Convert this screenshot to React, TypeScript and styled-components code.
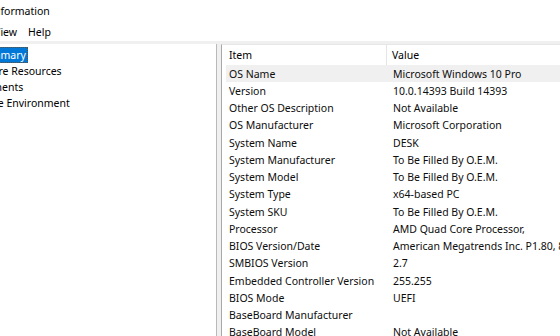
import styled, { createGlobalStyle } from "styled-components";

const GlobalStyle = createGlobalStyle`
  html, body {
    margin: 0;
    padding: 0;
    width: 560px;
    height: 336px;
    overflow: hidden;
    background: #ffffff;
  }
`;

const rows: [string, string][] = [
  ["OS Name", "Microsoft Windows 10 Pro"],
  ["Version", "10.0.14393 Build 14393"],
  ["Other OS Description", "Not Available"],
  ["OS Manufacturer", "Microsoft Corporation"],
  ["System Name", "DESK"],
  ["System Manufacturer", "To Be Filled By O.E.M."],
  ["System Model", "To Be Filled By O.E.M."],
  ["System Type", "x64-based PC"],
  ["System SKU", "To Be Filled By O.E.M."],
  ["Processor", "AMD Quad Core Processor,"],
  ["BIOS Version/Date", "American Megatrends Inc. P1.80, 8/15/2016"],
  ["SMBIOS Version", "2.7"],
  ["Embedded Controller Version", "255.255"],
  ["BIOS Mode", "UEFI"],
  ["BaseBoard Manufacturer", ""],
  ["BaseBoard Model", "Not Available"],
  ["BaseBoard Name", "Base Board"],
];

const treeItems = [
  { label: "System Summary", level: 0, selected: true },
  { label: "Hardware Resources", level: 1 },
  { label: "Components", level: 1 },
  { label: "Software Environment", level: 1 },
];

export default function App() {
  return (
    <>
      <GlobalStyle />
      <Window>
        <TitleBar>System Information</TitleBar>
        <MenuBar>
          <MenuItem>File</MenuItem>
          <MenuItem>Edit</MenuItem>
          <MenuItem>View</MenuItem>
          <MenuItem>Help</MenuItem>
        </MenuBar>
        <Panes>
          <TreePane>
            {treeItems.map((t) => (
              <TreeRow key={t.label} $level={t.level}>
                <TreeLabel $selected={!!t.selected}>{t.label}</TreeLabel>
              </TreeRow>
            ))}
          </TreePane>
          <ListPane>
            <Header>
              <HeaderCell>Item</HeaderCell>
              <HeaderCell $last>Value</HeaderCell>
            </Header>
            {rows.map(([item, value], i) => (
              <Row key={item} $hot={i === 0}>
                <Cell>{item}</Cell>
                <ValueCell>{value}</ValueCell>
              </Row>
            ))}
          </ListPane>
        </Panes>
      </Window>
    </>
  );
}

// the window is wider than the shot, its left part is cut off
const Window = styled.div`
  margin-left: -80px;
  width: 640px;
  height: 336px;
  display: flex;
  flex-direction: column;
  background: #f0f0f0;
  font-family: "Noto Sans", "Open Sans", sans-serif;
  font-size: 10.5px;
  color: #0d0d0d;
`;

const TitleBar = styled.div`
  height: 23px;
  line-height: 23px;
  padding-left: 32px;
  background: #ffffff;
  color: #000;
  white-space: nowrap;
`;

const MenuBar = styled.div`
  display: flex;
  height: 18px;
  padding-left: 11px;
  background: #ffffff;
`;

const MenuItem = styled.div`
  padding: 0 5.5px;
  line-height: 18px;
  color: #000;
`;

const Panes = styled.div`
  flex: 1;
  display: flex;
  gap: 4px;
  margin-top: 3px;
  min-height: 0;
`;

const TreePane = styled.div`
  width: 296px;
  flex-shrink: 0;
  background: #ffffff;
  border-right: 1px solid #b9b9b9;
  padding-top: 3px;
`;

const TreeRow = styled.div<{ $level: number }>`
  height: 16px;
  display: flex;
  align-items: center;
  padding-left: ${(p) => 18 + p.$level * 20}px;
  white-space: nowrap;
`;

const TreeLabel = styled.span<{ $selected: boolean }>`
  padding: 0 1px;
  line-height: 14px;
  border: 1px ${(p) => (p.$selected ? "dotted #6b4a2a" : "solid transparent")};
  background: ${(p) => (p.$selected ? "#0078d7" : "transparent")};
  color: ${(p) => (p.$selected ? "#ffffff" : "#000")};
`;

const ListPane = styled.div`
  flex: 1;
  min-width: 0;
  overflow: hidden;
  background: #ffffff;
  border-left: 1px solid #a8a8a8;
  border-top: 1px solid #e6e6e6;
`;

const Header = styled.div`
  display: grid;
  grid-template-columns: 165px 1fr;
  height: 20px;
`;

const HeaderCell = styled.div<{ $last?: boolean }>`
  line-height: 20px;
  padding-left: ${(p) => (p.$last ? 5 : 7)}px;
  border-right: ${(p) => (p.$last ? "none" : "1px solid #e5e5e5")};
  color: #000;
`;

const Row = styled.div<{ $hot: boolean }>`
  display: grid;
  grid-template-columns: 161px 1fr;
  height: 17.25px;
  margin-left: 4px;
  align-items: center;
  background: ${(p) => (p.$hot ? "#f0f0f0" : "transparent")};
  white-space: nowrap;
`;

const Cell = styled.div`
  padding-left: 3px;
  overflow: hidden;
`;

const ValueCell = styled.div`
  padding-left: 6px;
  overflow: hidden;
`;
